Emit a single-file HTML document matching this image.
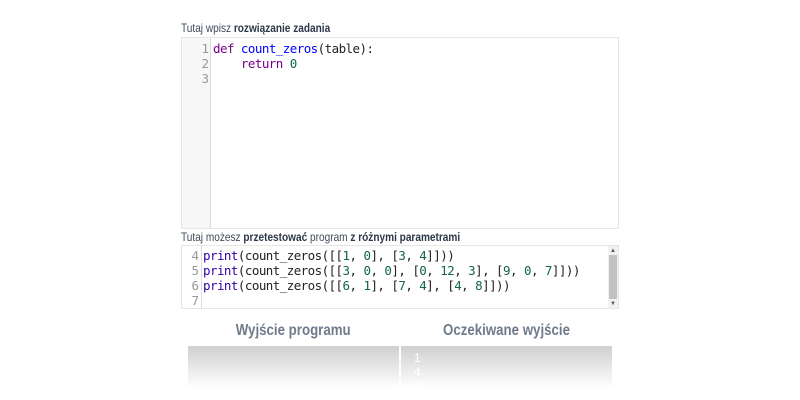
<!DOCTYPE html>
<html><head><meta charset="utf-8"><style>
body{margin:0;width:800px;height:400px;background:#fff;position:relative;overflow:hidden;font-family:"Liberation Sans",sans-serif}
.lbl{position:absolute;left:181px;font-size:12px;color:#3f4a5a;transform:scaleX(0.84);transform-origin:0 0;white-space:nowrap}
.lbl b{color:#2c3848}
.ed{position:absolute;left:181px;width:436px;border:1px solid #e6e6e6;background:#fff}
.gut{position:absolute;left:0;top:0;bottom:0;background:#f7f7f7;border-right:1px solid #ddd}
.code{position:absolute;font-family:"DejaVu Sans Mono",monospace;font-size:12.5px;line-height:15px;white-space:pre;color:#222;letter-spacing:-0.55px}
.ln{position:absolute;font-family:"DejaVu Sans Mono",monospace;font-size:12.5px;line-height:15px;color:#999;text-align:right;white-space:pre}
.k{color:#770088}.f{color:#0000ff}.n{color:#116644}.p{color:#3300aa}
.h{position:absolute;top:322px;font-size:16px;font-weight:bold;color:#6f7b8b;text-align:center;width:211px}
.h span{display:inline-block;transform:scaleX(0.83)}
.box{position:absolute;top:346px;height:42px;background:linear-gradient(#cfcfcf,#fff)}
</style></head><body>
<div class="lbl" style="top:21px">Tutaj wpisz <b>rozwiązanie zadania</b></div>
<div class="ed" style="top:37px;height:190px">
<div class="gut" style="width:28px"></div>
<div class="ln" style="left:0;width:27px;top:3px">1
2
3</div>
<div class="code" style="left:31px;top:3px"><span class="k">def</span> <span class="f">count_zeros</span>(table):
    <span class="k">return</span> <span class="n">0</span></div>
</div>
<div class="lbl" style="top:230px">Tutaj możesz <b>przetestować</b> program <b>z różnymi parametrami</b></div>
<div class="ed" style="top:245px;height:62px;overflow:hidden">
<div class="ln" style="left:0;width:17px;top:2px">4
5
6
7</div>
<div style="position:absolute;left:19px;top:0;bottom:0;border-left:1px solid #ddd"></div>
<div class="code" style="left:21px;top:2px"><span class="p">print</span>(count_zeros([[<span class="n">1</span>, <span class="n">0</span>], [<span class="n">3</span>, <span class="n">4</span>]]))
<span class="p">print</span>(count_zeros([[<span class="n">3</span>, <span class="n">0</span>, <span class="n">0</span>], [<span class="n">0</span>, <span class="n">12</span>, <span class="n">3</span>], [<span class="n">9</span>, <span class="n">0</span>, <span class="n">7</span>]]))
<span class="p">print</span>(count_zeros([[<span class="n">6</span>, <span class="n">1</span>], [<span class="n">7</span>, <span class="n">4</span>], [<span class="n">4</span>, <span class="n">8</span>]]))</div>
<div style="position:absolute;right:0;top:0;width:10px;bottom:0;background:#f1f1f1"></div>
<div style="position:absolute;right:1px;top:9px;width:8px;height:44px;background:#c1c1c1"></div>
<div style="position:absolute;right:2px;top:2px;font-size:6px;color:#555">▲</div>
<div style="position:absolute;right:2px;bottom:1px;font-size:6px;color:#555">▼</div>
</div>
<div class="h" style="left:188px"><span>Wyjście programu</span></div>
<div class="h" style="left:401px"><span>Oczekiwane wyjście</span></div>
<div class="box" style="left:188px;width:211px"></div>
<div class="box" style="left:401px;width:211px"><div style="position:absolute;left:13px;top:5px;font-size:12px;line-height:14px;color:#fff">1<br>4<br>0</div></div>
</body></html>
